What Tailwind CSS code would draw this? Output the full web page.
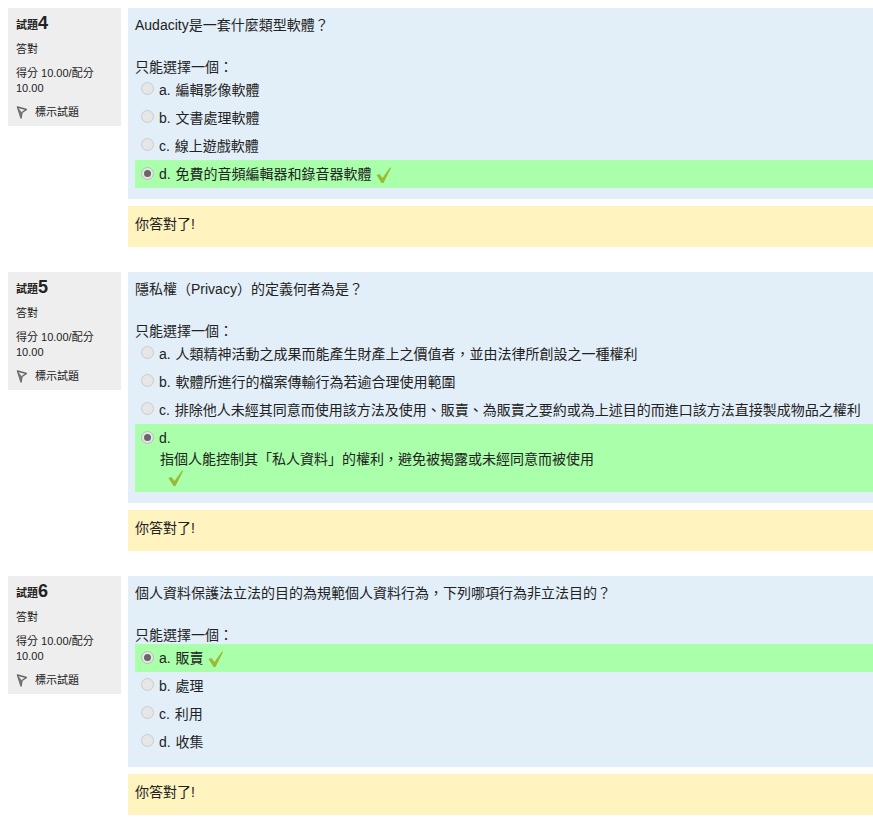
<!DOCTYPE html>
<html><head><meta charset="utf-8">
<script src="https://cdn.jsdelivr.net/npm/@tailwindcss/browser@4"></script>
</head>
<body class="bg-white overflow-hidden font-['Liberation_Sans','Noto_Sans_CJK_TC',sans-serif] text-[14px] leading-[20px] text-[#222]">
<div class="pt-2 pl-2 flex flex-col gap-[25px]">

<div class="flex gap-[7px]">
  <div class="w-[113px] h-[118px] shrink-0 bg-[#eee] px-2 pt-[8px] text-[11px] leading-[15px] text-[#222]">
    <div class="h-[18px] flex items-baseline font-bold"><span class="text-[11px]">試題</span><span class="text-[18px]">4</span></div>
    <div class="mt-[8px]">答對</div>
    <div class="mt-[9px]">得分 10.00/配分 10.00</div>
    <div class="mt-[9px] flex items-center gap-[8px]"><svg class="w-[11px] h-[13px]" viewBox="0 0 11 13"><path d="M1.5 1 L10.5 3.5 L6 6.5 L5 12 Z" fill="none" stroke="#666" stroke-width="1.4" stroke-linejoin="round"/><path d="M1.5 1 L5 12 L6 6.5 Z" fill="#777"/></svg><span>標示試題</span></div>
  </div>
  <div class="flex-1 flex flex-col gap-[7px]">
    <div class="bg-[#e2eff9] h-[191px] pt-[7px]">
      <div class="px-[7px]">Audacity是一套什麼類型軟體？</div>
      <div class="px-[7px] mt-[22px] h-[19px]">只能選擇一個：</div>
      <div>
        <div class="h-[28px] pl-[7px] flex items-start [word-spacing:1px]"><span class="mt-[6px] ml-[6px] w-[13px] h-[13px] rounded-full bg-[#e6e6e6] border border-[#ccc]"></span><span class="ml-[5px] mt-[4px]">a. 編輯影像軟體</span></div>
        <div class="h-[28px] pl-[7px] flex items-start [word-spacing:1px]"><span class="mt-[6px] ml-[6px] w-[13px] h-[13px] rounded-full bg-[#e6e6e6] border border-[#ccc]"></span><span class="ml-[5px] mt-[4px]">b. 文書處理軟體</span></div>
        <div class="h-[28px] pl-[7px] flex items-start [word-spacing:1px]"><span class="mt-[6px] ml-[6px] w-[13px] h-[13px] rounded-full bg-[#e6e6e6] border border-[#ccc]"></span><span class="ml-[5px] mt-[4px]">c. 線上遊戲軟體</span></div>
        <div class="h-[28px] ml-[7px] bg-[#aaffaa] flex items-start [word-spacing:1px]"><span class="mt-[7px] ml-[6px] w-[13px] h-[13px] rounded-full bg-[#e6e6e6] border border-[#bbb] flex items-center justify-center"><span class="w-[7px] h-[7px] rounded-full bg-[#666]"></span></span><span class="ml-[5px] mt-[4px]">d. 免費的音頻編輯器和錄音器軟體</span><svg class="ml-[4px] mt-[7px] w-[16px] h-[17px]" viewBox="0 0 16 17"><path d="M0.5 8 L3.5 7 L6.5 11 L14 0.5 L15 1 L7.5 16 L5.5 16 Z" fill="#9b3"/></svg></div>
      </div>
    </div>
    <div class="bg-[#fff3bf] h-[41px] px-[7px] pt-[8px]">你答對了!</div>
  </div>
</div>

<div class="flex gap-[7px]">
  <div class="w-[113px] h-[118px] shrink-0 bg-[#eee] px-2 pt-[8px] text-[11px] leading-[15px] text-[#222]">
    <div class="h-[18px] flex items-baseline font-bold"><span class="text-[11px]">試題</span><span class="text-[18px]">5</span></div>
    <div class="mt-[8px]">答對</div>
    <div class="mt-[9px]">得分 10.00/配分 10.00</div>
    <div class="mt-[9px] flex items-center gap-[8px]"><svg class="w-[11px] h-[13px]" viewBox="0 0 11 13"><path d="M1.5 1 L10.5 3.5 L6 6.5 L5 12 Z" fill="none" stroke="#666" stroke-width="1.4" stroke-linejoin="round"/><path d="M1.5 1 L5 12 L6 6.5 Z" fill="#777"/></svg><span>標示試題</span></div>
  </div>
  <div class="flex-1 flex flex-col gap-[7px]">
    <div class="bg-[#e2eff9] h-[231px] pt-[7px]">
      <div class="px-[7px]">隱私權（Privacy）的定義何者為是？</div>
      <div class="px-[7px] mt-[22px] h-[19px]">只能選擇一個：</div>
      <div>
        <div class="h-[28px] pl-[7px] flex items-start [word-spacing:1px]"><span class="mt-[6px] ml-[6px] w-[13px] h-[13px] rounded-full bg-[#e6e6e6] border border-[#ccc]"></span><span class="ml-[5px] mt-[4px]">a. 人類精神活動之成果而能產生財產上之價值者，並由法律所創設之一種權利</span></div>
        <div class="h-[28px] pl-[7px] flex items-start [word-spacing:1px]"><span class="mt-[6px] ml-[6px] w-[13px] h-[13px] rounded-full bg-[#e6e6e6] border border-[#ccc]"></span><span class="ml-[5px] mt-[4px]">b. 軟體所進行的檔案傳輸行為若逾合理使用範圍</span></div>
        <div class="h-[28px] pl-[7px] flex items-start whitespace-nowrap [word-spacing:1px]"><span class="mt-[6px] ml-[6px] w-[13px] h-[13px] shrink-0 rounded-full bg-[#e6e6e6] border border-[#ccc]"></span><span class="ml-[5px] mt-[4px]">c. 排除他人未經其同意而使用該方法及使用、販賣、為販賣之要約或為上述目的而進口該方法直接製成物品之權利</span></div>
        <div class="h-[68px] ml-[7px] bg-[#aaffaa]">
          <div class="flex items-start h-[24px]"><span class="mt-[7px] ml-[6px] w-[13px] h-[13px] rounded-full bg-[#e6e6e6] border border-[#bbb] flex items-center justify-center"><span class="w-[7px] h-[7px] rounded-full bg-[#666]"></span></span><span class="ml-[5px] mt-[4px]">d.</span></div>
          <div class="pl-[25px] mt-[1px]">指個人能控制其「私人資料」的權利，避免被揭露或未經同意而被使用</div>
          <svg class="ml-[33px] mt-[1px] w-[16px] h-[17px]" viewBox="0 0 16 17"><path d="M0.5 8 L3.5 7 L6.5 11 L14 0.5 L15 1 L7.5 16 L5.5 16 Z" fill="#9b3"/></svg>
        </div>
      </div>
    </div>
    <div class="bg-[#fff3bf] h-[41px] px-[7px] pt-[8px]">你答對了!</div>
  </div>
</div>

<div class="flex gap-[7px]">
  <div class="w-[113px] h-[118px] shrink-0 bg-[#eee] px-2 pt-[8px] text-[11px] leading-[15px] text-[#222]">
    <div class="h-[18px] flex items-baseline font-bold"><span class="text-[11px]">試題</span><span class="text-[18px]">6</span></div>
    <div class="mt-[8px]">答對</div>
    <div class="mt-[9px]">得分 10.00/配分 10.00</div>
    <div class="mt-[9px] flex items-center gap-[8px]"><svg class="w-[11px] h-[13px]" viewBox="0 0 11 13"><path d="M1.5 1 L10.5 3.5 L6 6.5 L5 12 Z" fill="none" stroke="#666" stroke-width="1.4" stroke-linejoin="round"/><path d="M1.5 1 L5 12 L6 6.5 Z" fill="#777"/></svg><span>標示試題</span></div>
  </div>
  <div class="flex-1 flex flex-col gap-[7px]">
    <div class="bg-[#e2eff9] h-[191px] pt-[7px]">
      <div class="px-[7px]">個人資料保護法立法的目的為規範個人資料行為，下列哪項行為非立法目的？</div>
      <div class="px-[7px] mt-[22px] h-[19px]">只能選擇一個：</div>
      <div>
        <div class="h-[28px] ml-[7px] bg-[#aaffaa] flex items-start [word-spacing:1px]"><span class="mt-[7px] ml-[6px] w-[13px] h-[13px] rounded-full bg-[#e6e6e6] border border-[#bbb] flex items-center justify-center"><span class="w-[7px] h-[7px] rounded-full bg-[#666]"></span></span><span class="ml-[5px] mt-[4px]">a. 販賣</span><svg class="ml-[4px] mt-[7px] w-[16px] h-[17px]" viewBox="0 0 16 17"><path d="M0.5 8 L3.5 7 L6.5 11 L14 0.5 L15 1 L7.5 16 L5.5 16 Z" fill="#9b3"/></svg></div>
        <div class="h-[28px] pl-[7px] flex items-start [word-spacing:1px]"><span class="mt-[6px] ml-[6px] w-[13px] h-[13px] rounded-full bg-[#e6e6e6] border border-[#ccc]"></span><span class="ml-[5px] mt-[4px]">b. 處理</span></div>
        <div class="h-[28px] pl-[7px] flex items-start [word-spacing:1px]"><span class="mt-[6px] ml-[6px] w-[13px] h-[13px] rounded-full bg-[#e6e6e6] border border-[#ccc]"></span><span class="ml-[5px] mt-[4px]">c. 利用</span></div>
        <div class="h-[28px] pl-[7px] flex items-start [word-spacing:1px]"><span class="mt-[6px] ml-[6px] w-[13px] h-[13px] rounded-full bg-[#e6e6e6] border border-[#ccc]"></span><span class="ml-[5px] mt-[4px]">d. 收集</span></div>
      </div>
    </div>
    <div class="bg-[#fff3bf] h-[41px] px-[7px] pt-[8px]">你答對了!</div>
  </div>
</div>

</div>
</body></html>
